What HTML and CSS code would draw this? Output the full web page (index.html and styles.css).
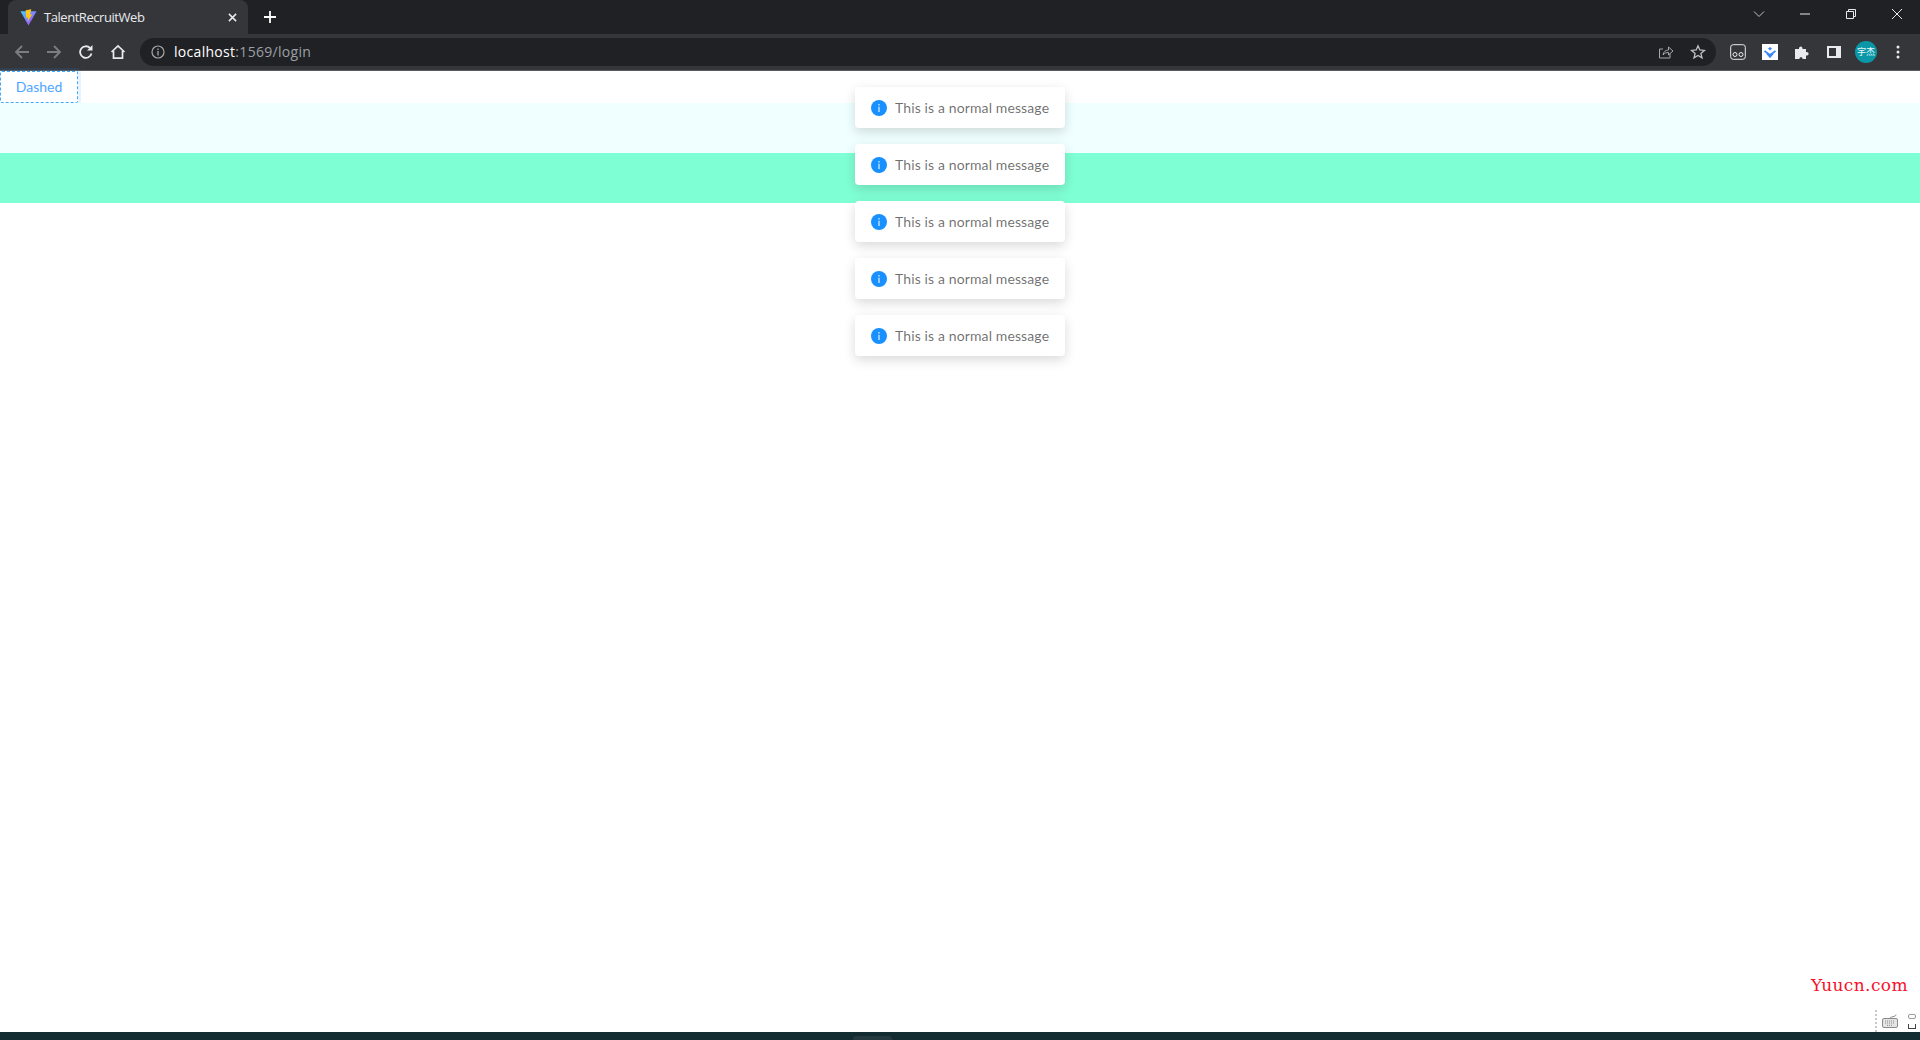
FILE: index.html
```html
<!DOCTYPE html>
<html lang="en">
<head>
  <meta charset="UTF-8" />
  <title>TalentRecruitWeb</title>
  <link rel="stylesheet" href="styles.css">
</head>
<body>
  <div class="browser">
    <div class="tab-strip">
      <div class="tab">
        <svg class="favicon" viewBox="0 0 18 18">
          <defs>
            <linearGradient id="viteBody" x1="0" y1="0" x2="1" y2="1"><stop offset="0" stop-color="#41d1ff"/><stop offset="1" stop-color="#bd34fe"/></linearGradient>
          </defs>
          <path d="M0.5 2.5 L17.5 2.5 L9 17.5 Z" fill="url(#viteBody)"/>
          <path d="M12 0.2 L6 1.2 L6.5 9.5 L8.5 9 L8 13.500 L13 5.500 L10.500 6 Z" fill="#ffc517"/>
        </svg>
        <span class="tab-title">TalentRecruitWeb</span>
        <svg class="tab-close" viewBox="0 0 10 10"><path d="M1 1 L9 9 M9 1 L1 9" stroke="#e8eaed" stroke-width="1.7"/></svg>
      </div>
      <svg class="new-tab" viewBox="0 0 12 12"><path d="M6 0 V12 M0 6 H12" stroke="#fff" stroke-width="1.8"/></svg>
      <div class="window-controls">
        <svg class="win-icon chevron" viewBox="0 0 12 12"><path d="M1 3.5 L6 8.5 L11 3.5" fill="none" stroke="#bdc1c6" stroke-width="1"/></svg>
        <svg class="win-icon" viewBox="0 0 12 12"><path d="M1 6 H11" stroke="#e8eaed" stroke-width="1"/></svg>
        <svg class="win-icon" viewBox="0 0 12 12"><path d="M1.5 3.5 H8.5 V10.5 H1.5 Z M3.5 3.5 V1.5 H10.5 V8.5 H8.5" fill="none" stroke="#e8eaed" stroke-width="1"/></svg>
        <svg class="win-icon" viewBox="0 0 12 12"><path d="M1 1 L11 11 M11 1 L1 11" stroke="#e8eaed" stroke-width="1"/></svg>
      </div>
    </div>

    <div class="toolbar">
      <svg class="tool-icon" viewBox="0 0 16 16"><path d="M15 8 H2 M8 2 L2 8 L8 14" fill="none" stroke="#7b7d81" stroke-width="1.8"/></svg>
      <svg class="tool-icon" viewBox="0 0 16 16"><path d="M1 8 H14 M8 2 L14 8 L8 14" fill="none" stroke="#7b7d81" stroke-width="1.8"/></svg>
      <svg class="tool-icon" viewBox="0 0 16 16"><path d="M13.5 9.5 A5.8 5.8 0 1 1 12 4" fill="none" stroke="#e8eaed" stroke-width="1.8"/><path d="M14.5 1 V6.5 H9 Z" fill="#e8eaed"/></svg>
      <svg class="tool-icon" viewBox="0 0 16 16"><path d="M1.5 8 L8 1.8 L14.5 8 M3.5 7 V14.2 H12.5 V7" fill="none" stroke="#e8eaed" stroke-width="1.7"/></svg>
      <div class="omnibox">
        <svg class="info-icon" viewBox="0 0 14 14"><circle cx="7" cy="7" r="6" fill="none" stroke="#a5a7aa" stroke-width="1.2"/><path d="M7 6 V10.4 M7 3.6 V5" stroke="#a5a7aa" stroke-width="1.3"/></svg>
        <span class="url"><span class="url-host">localhost</span>:1569/login</span>
        <svg class="omni-icon" viewBox="0 0 16 16"><path d="M12 9.5 V14 H1.5 V5 H5" fill="none" stroke="#a5a7aa" stroke-width="1"/><path d="M5 11 C5.5 7.5 8 6 10.5 6 V3 L15 7 L10.5 11 V8.5 C8.5 8.5 6.5 9 5 11 Z" fill="none" stroke="#a5a7aa" stroke-width="1"/></svg>
        <svg class="omni-icon" viewBox="0 0 16 16"><path d="M8 1.8 L9.8 6 L14.4 6.4 L10.9 9.4 L12 13.9 L8 11.5 L4 13.9 L5.1 9.4 L1.6 6.4 L6.2 6 Z" fill="none" stroke="#bfc1c4" stroke-width="1.3"/></svg>
      </div>
      <div class="extensions">
        <svg class="ext-icon" viewBox="0 0 16 16"><rect x="0.7" y="0.7" width="14.6" height="14.6" rx="2.5" fill="none" stroke="#e8eaed" stroke-width="1"/><circle cx="5" cy="10.5" r="2" fill="none" stroke="#e8eaed" stroke-width="1"/><circle cx="11" cy="10.5" r="2" fill="none" stroke="#e8eaed" stroke-width="1"/></svg>
        <svg class="ext-icon" viewBox="0 0 16 16"><rect width="16" height="16" fill="#fff"/><path d="M2.5 7 L8 11 L13.500 7 M5 9.500 L8 13 L11 9.500" fill="none" stroke="#3a86f7" stroke-width="1.700"/><path d="M6 4.500 L8 3 L10 4.500 L8 6.500 Z" fill="#3a86f7"/></svg>
        <svg class="ext-icon" viewBox="0 0 16 16"><path d="M1 5 H5 C4.500 1.500 9 1.500 8.500 5 H12 V8 C15.500 7.500 15.500 12 12 11.500 V15 H8.500 C9 12.500 5 12.500 5.500 15 H1 Z" fill="#e8eaed"/></svg>
        <svg class="ext-icon" viewBox="0 0 16 16"><path fill-rule="evenodd" d="M1 2 H15 V14 H1 Z M3 4 V12 H10 V4 Z" fill="#e8eaed"/></svg>
        <div class="avatar">宇杰</div>
        <svg class="ext-icon menu-dots" viewBox="0 0 16 16"><circle cx="8" cy="3" r="1.500" fill="#e8eaed"/><circle cx="8" cy="8" r="1.500" fill="#e8eaed"/><circle cx="8" cy="13" r="1.500" fill="#e8eaed"/></svg>
      </div>
    </div>

    <main class="page">
      <button class="btn-dashed" type="button">Dashed</button>
      <div class="band band-azure"></div>
      <div class="band band-aqua"></div>

      <div class="message-list">
        <div class="message"><svg class="message-icon" viewBox="0 0 16 16"><circle cx="8" cy="8" r="8" fill="#1890ff"/><path d="M8 6.800 V12 M8 4 V5.500" stroke="#b9dcff" stroke-width="1.500"/></svg>This is a normal message</div>
        <div class="message"><svg class="message-icon" viewBox="0 0 16 16"><circle cx="8" cy="8" r="8" fill="#1890ff"/><path d="M8 6.800 V12 M8 4 V5.500" stroke="#b9dcff" stroke-width="1.500"/></svg>This is a normal message</div>
        <div class="message"><svg class="message-icon" viewBox="0 0 16 16"><circle cx="8" cy="8" r="8" fill="#1890ff"/><path d="M8 6.800 V12 M8 4 V5.500" stroke="#b9dcff" stroke-width="1.500"/></svg>This is a normal message</div>
        <div class="message"><svg class="message-icon" viewBox="0 0 16 16"><circle cx="8" cy="8" r="8" fill="#1890ff"/><path d="M8 6.800 V12 M8 4 V5.500" stroke="#b9dcff" stroke-width="1.500"/></svg>This is a normal message</div>
        <div class="message"><svg class="message-icon" viewBox="0 0 16 16"><circle cx="8" cy="8" r="8" fill="#1890ff"/><path d="M8 6.800 V12 M8 4 V5.500" stroke="#b9dcff" stroke-width="1.500"/></svg>This is a normal message</div>
      </div>

      <div class="watermark">Yuucn.com</div>
      <div class="tray">
        <svg class="tray-keyboard" viewBox="0 0 16 14"><rect x="0.500" y="4.500" width="15" height="9" rx="1.500" fill="#e4e4e4" stroke="#8a8a8a"/><path d="M3 7 H13 M3 9 H13 M5 11.300 H11" stroke="#8a8a8a" stroke-width="1" stroke-dasharray="1 1"/><path d="M8 4.500 C8 2 14 3.500 14 0.500" fill="none" stroke="#8a8a8a"/></svg>
        <div class="tray-expand"><span class="tray-top"></span><span class="tray-bottom"></span></div>
      </div>
    </main>

    <div class="desk-bar"><span class="desk-notch"></span></div>
  </div>
</body>
</html>
```

FILE: styles.css
```css
:root {
  --strip: #202124;
  --chrome: #35363a;
  --omnibox: #202124;
  --text: #e8eaed;
  --muted: #9aa0a6;
}
* {
  box-sizing: border-box;
}
html, body {
  height: 100%;
  margin: 0;
  overflow: hidden;
}
body {
  font-family: Lato, "Liberation Sans", sans-serif;
}
.browser {
  display: flex;
  flex-direction: column;
  height: 1040px;
}

/* tab strip */
.tab-strip {
  display: flex;
  align-items: flex-end;
  height: 34px;
  background: var(--strip);
  padding-left: 8px;
}
.tab {
  display: flex;
  align-items: center;
  width: 240px;
  height: 34px;
  padding: 0 11px 0 12px;
  background: var(--chrome);
  border-radius: 8px 8px 0 0;
  color: var(--text);
}
.favicon {
  width: 17px;
  height: 17px;
  flex: none;
}
.tab-title {
  flex: 1;
  margin-left: 7px;
  font: 13px "Open Sans", sans-serif;
  letter-spacing: -0.45px;
}
.tab-close {
  width: 9px;
  height: 9px;
}
.new-tab {
  width: 12px;
  height: 12px;
  margin: 0 0 11px 16px;
}
.window-controls {
  display: flex;
  align-items: center;
  gap: 34px;
  margin-left: auto;
  align-self: flex-start;
  height: 28px;
  padding-right: 17px;
}
.win-icon {
  width: 12px;
  height: 12px;
}

/* toolbar */
.toolbar {
  display: flex;
  align-items: center;
  height: 37px;
  padding: 0 0 1px 14px;
  background: var(--chrome);
  border-bottom: 1px solid #5a5b5e;
}
.tool-icon {
  width: 16px;
  height: 16px;
  margin-right: 16px;
  flex: none;
}
.omnibox {
  display: flex;
  align-items: center;
  flex: 1;
  height: 28px;
  margin-left: -2px;
  padding: 0 10px 0 11px;
  background: var(--omnibox);
  border-radius: 14px;
}
.info-icon {
  width: 14px;
  height: 14px;
}
.url {
  flex: 1;
  margin-left: 9px;
  font: 14px "Open Sans", sans-serif;
  letter-spacing: 0.3px;
  color: var(--muted);
}
.url-host {
  color: #fff;
}
.omni-icon {
  width: 16px;
  height: 16px;
  margin-left: 16px;
}
.extensions {
  display: flex;
  align-items: center;
  gap: 16px;
  padding: 0 14px;
}
.ext-icon {
  width: 16px;
  height: 16px;
}
.avatar {
  width: 22px;
  height: 22px;
  margin: 0 -3px;
  border-radius: 50%;
  background: #0b97a8;
  color: #e6f7f8;
  font: 9px/22px "Noto Sans CJK SC", sans-serif;
  text-align: center;
}

/* page */
.page {
  position: relative;
  flex: 1;
  background: #fff;
}
.btn-dashed {
  display: block;
  width: 78px;
  height: 32px;
  padding: 0 0 2px;
  background: #fff;
  border: 1px dashed #40a9ff;
  border-radius: 2px;
  box-shadow: 0 0 0 3px rgba(24, 144, 255, 0.1);
  color: #4da6ff;
  font: 14px Lato, sans-serif;
}
.band {
  height: 50px;
}
.band-azure {
  background: azure;
}
.band-aqua {
  background: aquamarine;
}

/* toasts float over the page */
.message-list {
  position: absolute;
  top: 16px;
  left: 855px;
  display: flex;
  flex-direction: column;
  gap: 16px;
}
.message {
  display: flex;
  align-items: center;
  width: 210px;
  height: 41px;
  padding-left: 16px;
  background: #fff;
  border-radius: 4px;
  box-shadow: 0 4px 12px rgba(0, 0, 0, 0.15);
  color: rgba(0, 0, 0, 0.58);
  font-size: 14px;
  letter-spacing: 0.12px;
  white-space: nowrap;
}
.message-icon {
  width: 16px;
  height: 16px;
  margin-right: 8px;
  flex: none;
}
.watermark {
  position: absolute;
  right: 12px;
  bottom: 37px;
  font: 17px "DejaVu Serif", serif;
  letter-spacing: 0.4px;
  color: #f5112d;
}
.tray {
  position: absolute;
  right: 0;
  bottom: 0;
  display: flex;
  align-items: center;
  gap: 10px;
  height: 22px;
  padding: 0 4px 0 5px;
  border-left: 2px dotted #c8c8c8;
}
.tray-keyboard {
  width: 16px;
  height: 14px;
}
.tray-expand {
  display: flex;
  flex-direction: column;
  gap: 5px;
}
.tray-top {
  width: 8px;
  height: 5px;
  border: 1px solid #999;
  border-radius: 2px;
}
.tray-bottom {
  width: 8px;
  height: 5px;
  border: 1px solid #444;
  border-top: none;
}
.desk-bar {
  display: flex;
  align-items: flex-end;
  height: 8px;
  padding-left: 853px;
  background: #122c31;
}
.desk-notch {
  width: 39px;
  height: 4px;
  background: #23393d;
  border-radius: 3px 3px 0 0;
}
```
